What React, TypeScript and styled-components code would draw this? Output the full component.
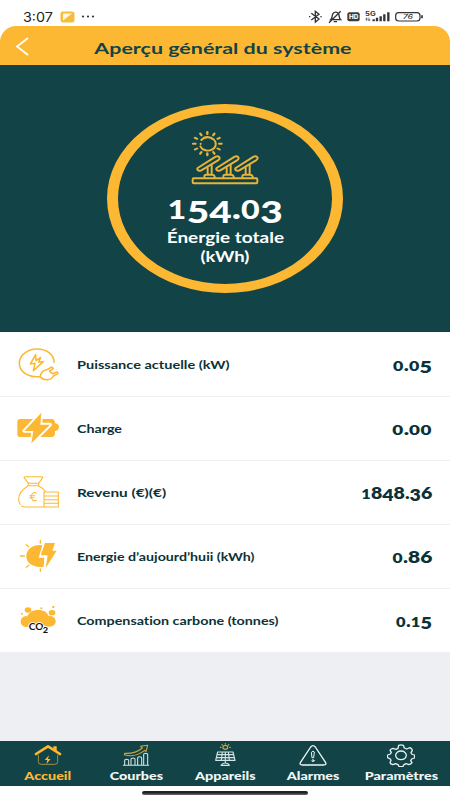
import React from "react";
import styled, { createGlobalStyle } from "styled-components";

const amber = "#fdb833";
const teal = "#124447";
const ink = "#0b3236";

const Global = createGlobalStyle`
  * { box-sizing: border-box; }
  body {
    margin: 0;
    background: #fff;
    font-family: Lato, "Noto Sans", sans-serif;
    font-variant-ligatures: none;
  }
`;

const Screen = styled.main`
  width: 450px;
  height: 800px;
  display: flex;
  flex-direction: column;
  overflow: hidden;
  background: #fff;
`;

const StatusBar = styled.div`
  height: 26px;
  flex: none;
  display: flex;
  align-items: center;
  justify-content: space-between;
  padding: 7px 26px 0 23px;
  color: #222;
`;

const StatusLeft = styled.div`
  display: flex;
  align-items: center;
`;

const Wide = styled.span<{ $sx: number; $origin?: string }>`
  display: inline-block;
  white-space: nowrap;
  transform: scaleX(${(p) => p.$sx});
  transform-origin: ${(p) => p.$origin ?? "center"} center;
`;

const Clock = styled.div`
  width: 37px;
  font: 400 13px/16px Inter, sans-serif;
`;

const Header = styled.header`
  height: 39px;
  flex: none;
  display: grid;
  grid-template-columns: 45px 1fr 45px;
  align-items: center;
  background: ${amber};
  border-radius: 16px 16px 0 0;
`;

const BackIcon = styled.svg`
  margin-left: 15px;
`;

const Title = styled.h1`
  margin: 5px 0 0 -4px;
  text-align: center;
  font-size: 16px;
  line-height: 20px;
  font-weight: 700;
  color: ${teal};
`;

const Hero = styled.section`
  height: 267px;
  flex: none;
  display: flex;
  justify-content: center;
  padding-top: 39px;
  background: ${teal};
`;

const Ring = styled.div`
  width: 236px;
  height: 189px;
  border: solid ${amber};
  border-width: 9px 11px;
  border-radius: 50%;
  display: flex;
  flex-direction: column;
  align-items: center;
  color: #fff;
`;

const HeroIcon = styled.svg`
  margin: 17px 0 0;
  flex: none;
`;

const Total = styled.div`
  font-size: 31px;
  font-weight: 900;
  line-height: 36px;
  margin-top: 4px;
`;

const TotalLabel = styled.div`
  margin-top: 1px;
  font-size: 15px;
  font-weight: 700;
  line-height: 19px;
  text-align: center;
`;

const List = styled.ul`
  margin: 0;
  padding: 0;
  list-style: none;
  flex: none;
`;

const Row = styled.li`
  height: 64px;
  display: flex;
  align-items: center;
  padding: 0 18px 0 17px;
  border-top: 1px solid #efeff1;
  color: ${ink};
  &:first-child { border-top-color: transparent; }
`;

const RowLabel = styled.div`
  margin-left: 17px;
  padding-top: 1px;
  flex: 1;
  font-size: 11.5px;
  line-height: 16px;
  font-weight: 700;
`;

const RowValue = styled.div`
  padding-top: 1px;
  font-size: 16px;
  line-height: 22px;
  font-weight: 800;
`;

const SmallDigit = styled.span`
  font-size: 0.83em;
  letter-spacing: 0.02em;
`;

const LowDigit = styled.span`
  vertical-align: -0.14em;
  line-height: 0;
`;

const Filler = styled.div`
  flex: 1;
  background: #eeeff3;
`;

const Nav = styled.nav`
  height: 45px;
  flex: none;
  display: grid;
  grid-template-columns: repeat(5, 88.3px);
  padding-left: 4px;
  background: ${teal};
`;

const NavItem = styled.div<{ $active?: boolean }>`
  display: flex;
  flex-direction: column;
  align-items: center;
  gap: 1px;
  padding-top: 2px;
  font-size: 11.5px;
  line-height: 16px;
  font-weight: 900;
  color: ${(p) => (p.$active ? amber : "#f2f7f7")};
`;

const HomeArea = styled.div`
  height: 14px;
  flex: none;
  display: flex;
  justify-content: center;
  padding-top: 5px;
`;

const HomeBar = styled.div`
  width: 166px;
  height: 4px;
  border-radius: 2px;
  background: linear-gradient(#222 40%, #6b6b6b);
`;

const Stroke = styled.g<{ $c?: string; $w?: number }>`
  fill: none;
  stroke: ${(p) => p.$c ?? amber};
  stroke-width: ${(p) => p.$w ?? 4};
  stroke-linecap: round;
  stroke-linejoin: round;
`;

/* Text figures: 0-2 sit at x-height, 3/4/5/7/9 descend below the baseline. */
function Figures({ value }: { value: string }) {
  return (
    <>
      {value.split("").map((ch, i) =>
        "012".includes(ch) ? (
          <SmallDigit key={i}>{ch}</SmallDigit>
        ) : "34579".includes(ch) ? (
          <LowDigit key={i}>{ch}</LowDigit>
        ) : (
          <span key={i}>{ch}</span>
        )
      )}
    </>
  );
}

function StatusIcons() {
  return (
    <svg width="116" height="14" viewBox="248 29 348 42" fill="none" stroke="#333" strokeWidth="4">
      <path d="M258 39 281 56 270 65V33L281 42 258 59M251 49h4M285 49h4" />
      <path d="M316 58c6-5 3-12 7-18 5-7 14-5 17 1 3 6 0 12 6 17zM325 64h10M346 33 311 67" />
      <rect x="366" y="36" width="37" height="27" rx="6" fill="#3b3b3b" stroke="none" />
      <text x="371" y="55" fontSize="17" fontWeight="800" fontFamily="Inter" fill="#fff" stroke="none" textLength="28" lengthAdjust="spacingAndGlyphs">HD</text>
      <text x="419" y="47" fontSize="18" fontWeight="700" fontFamily="Inter" fill="#333" stroke="none" textLength="32" lengthAdjust="spacingAndGlyphs">5G</text>
      <path d="M424 52v10M431 52v10M420 56h7M428 59h7" strokeWidth="2" />
      <path d="M445 57v6M455 52v11M466 48v15M477 42v21M489 36v27" strokeWidth="7" />
      <rect x="511" y="37" width="73" height="25" rx="9" strokeWidth="3.6" />
      <path d="M590 45v9" strokeWidth="5" />
      <text x="532" y="56" fontSize="19" fontWeight="500" fontStyle="italic" fontFamily="Inter" fill="#333" stroke="none" textLength="31" lengthAdjust="spacingAndGlyphs">76</text>
    </svg>
  );
}

function SolarFarm() {
  const rays = Array.from({ length: 12 }, (_, i) => i * 30);
  return (
    <HeroIcon width="68" height="55" viewBox="288 105 204 165">
      <Stroke $c="#eab339" $w={5.8}>
        <path d="M319 135a24 20 0 1 1-3 19M317 146v1M327 128q14-6 24 3" />
        {rays.map((a) => (
          <path key={a} d="M0-35v6" transform={`translate(337 146) scale(1.22 1) rotate(${a})`} />
        ))}
        {[0, 57, 114].map((x) => (
          <g key={x} transform={`translate(${x} 0)`}>
            <path d="M308 219 362 185q8-4 12 3 1 4-5 8l-50 30q-7 3-11-1-3-3 0-6z" />
            <path d="M338 219v20M350 210v29M328 249v-5q0-5 6-5h17q6 0 8 5v5" />
          </g>
        ))}
        <rect x="293" y="250" width="194" height="15" rx="3" />
      </Stroke>
    </HeroIcon>
  );
}

function PowerIcon() {
  return (
    <svg width="43" height="35" viewBox="51 36 129 105">
      <Stroke $w={4.6}>
        <path d="M162 82C162 57 139 42 111 42S58 61 58 84s20 41 50 41h13q1-16 16-20l6-2 12-7 5 4-11 9" />
        <path d="M149 109l9 7 13-5 3 5-14 7q-5 11-18 11-12 1-20-7" />
        <path d="M107 59 91 87l14-2-5 22 30-27-14 1 6-14-14 10z" />
      </Stroke>
    </svg>
  );
}

function ChargeIcon() {
  return (
    <svg width="43" height="35" viewBox="51 228 129 105">
      <path d="M60 252h94q11 0 11 12l7 3q5 2 5 9t-5 10l-7 3v6q0 11-11 11H60q-8 0-8-8v-38q0-8 8-8z" fill={amber} />
      <path
        d="M124 233 73 288h27l-6 37 56-56h-29z"
        fill={amber}
        stroke="#fff"
        strokeWidth="11"
        strokeLinejoin="round"
        paintOrder="stroke"
      />
    </svg>
  );
}

function RevenueIcon() {
  return (
    <svg width="43" height="35" viewBox="51 45 129 105">
      <Stroke $w={3.2}>
        <path d="M85 70 72 52q0-2 5-2h48q5 0 3 3l-12 17M86 70h29q3 3 0 7H86q-4-3 0-7z" />
        <path d="M84 78C66 88 56 101 56 118q0 10 5 15M65 138q5 3 12 3h53M116 78q14 7 20 16" />
        <path d="M132 96h43v45h-43zM132 108h43M132 119h43M132 130h43" />
        <path d="M109 99c-8-4-15 1-15 11s7 15 15 11M89 107h15M89 113h13" />
      </Stroke>
    </svg>
  );
}

function SunIcon() {
  return (
    <svg width="43" height="35" viewBox="51 237 129 105">
      <path d="M127 256C101 252 80 267 79 288s22 37 52 32l2-27h-17z" fill={amber} />
      <path d="M135 249h30l-8 23h13l-33 52 6-38h-21z" fill={amber} />
      <Stroke>
        <path d="M121 241v8M121 327v7M61 288h12M79 254l7 6M79 322l8-6" />
      </Stroke>
    </svg>
  );
}

function CarbonIcon() {
  return (
    <svg width="43" height="35" viewBox="51 429 129 105">
      <g fill={amber}>
        <path d="M83 501c-12 1-21-6-21-16 0-12 10-18 20-16 6-14 19-20 33-19 16 0 27 7 30 17 13-1 22 6 22 17s-10 18-24 16q-31-14-60 1z" />
        <ellipse cx="84" cy="450" rx="10" ry="8" />
        <ellipse cx="156" cy="458" rx="10" ry="8" />
        <circle cx="66" cy="461" r="3" />
        <circle cx="124" cy="445" r="3" />
        <circle cx="160" cy="441" r="3.5" />
      </g>
      <g fontFamily="Lato" fontWeight="700" fill="#111" stroke="#fff" strokeWidth="5" paintOrder="stroke">
        <text x="86" y="509" fontSize="29" textLength="44" lengthAdjust="spacingAndGlyphs">CO</text>
        <text x="128" y="520" fontSize="22" fontWeight="900" textLength="16" lengthAdjust="spacingAndGlyphs">2</text>
      </g>
    </svg>
  );
}

const pale = "#d5e5e6";

function HomeIcon() {
  return (
    <svg width="28" height="24" viewBox="104 24 84 72">
      <Stroke $w={8}><path d="m110 57 36-23 36 23" /></Stroke>
      <path d="M162 34h10v18l-10-7z" fill={amber} />
      <Stroke $w={2.4} $c="#c7a143"><path d="M117 60v20q0 8 9 8h40q9 0 9-8V60" /></Stroke>
      <path d="m149 61-13 14h8l-3 12 13-15h-8z" fill={amber} />
    </svg>
  );
}

function CurvesIcon() {
  return (
    <svg width="28" height="24" viewBox="369 24 84 72">
      <Stroke $w={3.2} $c={pale}>
        <path d="M373 91h76M377 91V76q0-3 6-3t6 3v15M396 91V72q0-3 6-3t6 3v19M416 91V68q0-3 6-3t6 3v23M434 91V58q0-3 6-3t6 3v33" />
      </Stroke>
      <Stroke $w={3.2} $c="#d0a440">
        <path d="M376 59q32 10 61-13l4 4 5-19-21 3 5 5q-22 18-53 16z" />
      </Stroke>
    </svg>
  );
}

function DevicesIcon() {
  return (
    <svg width="28" height="24" viewBox="18 9 84 72">
      <Stroke $w={3.6} $c="#d0a440">
        <ellipse cx="61" cy="22" rx="7" ry="6" />
        <path d="M61 11v1M48 22h-2M76 22h-2M51 14l1 1M71 14l-1 1" />
      </Stroke>
      <Stroke $w={3.4} $c={pale}>
        <path d="M38 36h46l6 25H32zM36 44h50M34 53h54M52 36l-3 25M70 36l3 25M61 36v33M48 76q4-7 13-7t12 7z" />
      </Stroke>
    </svg>
  );
}

function AlarmIcon() {
  return (
    <svg width="28" height="24" viewBox="223 24 84 72">
      <Stroke $w={4} $c="#eef5f5">
        <path d="M258 36q7-8 14 0l31 47q3 7-6 7h-64q-9 0-6-7z" />
      </Stroke>
      <Stroke $w={3} $c="#eef5f5">
        <path d="M261 51q4-5 8 0l-2 17h-4z" />
        <circle cx="265" cy="77" r="3" />
      </Stroke>
    </svg>
  );
}

function SettingsIcon() {
  return (
    <svg width="28" height="24" viewBox="487 24 84 72">
      <Stroke $w={4} $c="#e6f0f0">
        <path d="M522 31q7-3 14 0l3 8 7 3 10-4q6 3 7 8l-4 7 2 4 8 3q2 5 0 9l-8 3-3 5 4 6q-3 5-9 6l-9-3-6 3-3 5q-6 2-12 0l-3-5-7-3-9 3q-6-2-8-6l3-7-2-4-8-4q-2-4 0-8l8-3 3-5-4-6q3-5 9-6l9 3 6-3z" />
        <ellipse cx="529" cy="61" rx="16" ry="13" />
      </Stroke>
    </svg>
  );
}

const rows = [
  { icon: <PowerIcon />, label: "Puissance actuelle (kW)", value: "0.05", lx: 1.265, vx: 1.34 },
  { icon: <ChargeIcon />, label: "Charge", value: "0.00", lx: 1.24, vx: 1.42 },
  { icon: <RevenueIcon />, label: "Revenu (€)(€)", value: "1848.36", lx: 1.335, vx: 1.22 },
  { icon: <SunIcon />, label: "Energie d’aujourd’huii (kWh)", value: "0.86", lx: 1.235, vx: 1.31 },
  { icon: <CarbonIcon />, label: "Compensation carbone (tonnes)", value: "0.15", lx: 1.245, vx: 1.24 },
];

const tabs = [
  { icon: <HomeIcon />, label: "Accueil", sx: 1.25 },
  { icon: <CurvesIcon />, label: "Courbes", sx: 1.25 },
  { icon: <DevicesIcon />, label: "Appareils", sx: 1.25 },
  { icon: <AlarmIcon />, label: "Alarmes", sx: 1.25 },
  { icon: <SettingsIcon />, label: "Paramètres", sx: 1.25 },
];

export default function App() {
  return (
    <Screen>
      <Global />
      <StatusBar>
        <StatusLeft>
          <Clock><Wide $sx={1.1} $origin="left">3:07</Wide></Clock>
          <svg width="36" height="12" viewBox="0 0 36 12">
            <rect x="0.5" y="0.5" width="14" height="11" rx="2.5" fill="#f6bd3c" />
            <path d="M3 9.500V3.500q0-1 1-1h8z" fill="#fff6df" />
            <g fill="#333"><circle cx="23" cy="5.500" r="1.1" /><circle cx="28" cy="5.500" r="1.1" /><circle cx="33" cy="5.500" r="1.1" /></g>
          </svg>
        </StatusLeft>
        <StatusIcons />
      </StatusBar>
      <Header>
        <BackIcon width="15" height="20" viewBox="0 0 15 20">
          <path d="M13 2 2 10.500 13 19" fill="none" stroke="#fff" strokeWidth="1.7" />
        </BackIcon>
        <Title><Wide $sx={1.34}>Aperçu général du système</Wide></Title>
      </Header>
      <Hero>
        <Ring>
          <SolarFarm />
          <Total><Wide $sx={1.25}><Figures value="154.03" /></Wide></Total>
          <TotalLabel>
            <Wide $sx={1.265}>Énergie totale</Wide>
            <br />
            <Wide $sx={1.23}>(kWh)</Wide>
          </TotalLabel>
        </Ring>
      </Hero>
      <List>
        {rows.map((r) => (
          <Row key={r.label}>
            {r.icon}
            <RowLabel><Wide $sx={r.lx} $origin="left">{r.label}</Wide></RowLabel>
            <RowValue><Wide $sx={r.vx} $origin="right"><Figures value={r.value} /></Wide></RowValue>
          </Row>
        ))}
      </List>
      <Filler />
      <Nav>
        {tabs.map((t, i) => (
          <NavItem key={t.label} $active={i === 0}>
            {t.icon}
            <Wide $sx={t.sx}>{t.label}</Wide>
          </NavItem>
        ))}
      </Nav>
      <HomeArea><HomeBar /></HomeArea>
    </Screen>
  );
}
